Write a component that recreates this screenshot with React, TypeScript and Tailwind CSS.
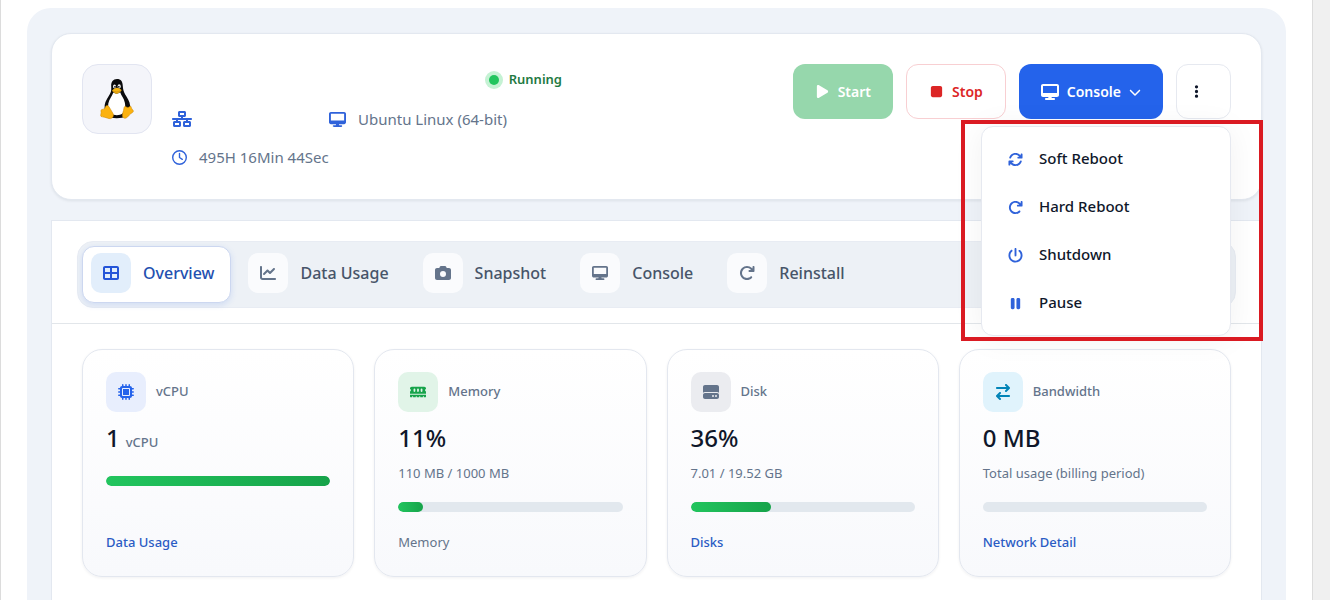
import { useState } from "react";
import type { IconType } from "react-icons";
import {
  FaArrowRightArrowLeft,
  FaArrowRotateRight,
  FaArrowsRotate,
  FaCamera,
  FaChartLine,
  FaChevronDown,
  FaDesktop,
  FaEllipsisVertical,
  FaHardDrive,
  FaMemory,
  FaMicrochip,
  FaNetworkWired,
  FaPause,
  FaPlay,
  FaPowerOff,
  FaRegClock,
  FaStop,
  FaTableCellsLarge,
} from "react-icons/fa6";

// Types
type Stat = {
  label: string;
  value: string;
  unit?: string;
  detail?: string;
  percent: number;
  footer: string;
  isLink: boolean;
  icon: IconType;
  tile: string;
};

const tabs: { name: string; icon: IconType }[] = [
  { name: "Overview", icon: FaTableCellsLarge },
  { name: "Data Usage", icon: FaChartLine },
  { name: "Snapshot", icon: FaCamera },
  { name: "Console", icon: FaDesktop },
  { name: "Reinstall", icon: FaArrowRotateRight },
];

const powerActions: { name: string; icon: IconType }[] = [
  { name: "Soft Reboot", icon: FaArrowsRotate },
  { name: "Hard Reboot", icon: FaArrowRotateRight },
  { name: "Shutdown", icon: FaPowerOff },
  { name: "Pause", icon: FaPause },
];

const stats: Stat[] = [
  {
    label: "vCPU",
    value: "1",
    unit: "vCPU",
    percent: 100,
    footer: "Data Usage",
    isLink: true,
    icon: FaMicrochip,
    tile: "bg-[#e8eefd] text-[#2563eb]",
  },
  {
    label: "Memory",
    value: "11%",
    detail: "110 MB / 1000 MB",
    percent: 11,
    footer: "Memory",
    isLink: false,
    icon: FaMemory,
    tile: "bg-[#e1f4e8] text-[#16a34a]",
  },
  {
    label: "Disk",
    value: "36%",
    detail: "7.01 / 19.52 GB",
    percent: 36,
    footer: "Disks",
    isLink: true,
    icon: FaHardDrive,
    tile: "bg-[#ebecf0] text-[#64748b]",
  },
  {
    label: "Bandwidth",
    value: "0 MB",
    detail: "Total usage (billing period)",
    percent: 0,
    footer: "Network Detail",
    isLink: true,
    icon: FaArrowRightArrowLeft,
    tile: "bg-[#e0f3fc] text-[#0284b7]",
  },
];

function Tux() {
  return (
    <svg viewBox="0 0 34 42" className="h-[42px] w-[34px]" role="img" aria-label="Linux">
      <path
        d="M17 1c-4 0-6 3-5.800 7 .1 3 .4 5-1.300 8-1.700 3-4.700 7-5.200 11-.5 4 .5 8 3 11 3 3 15 3 18 0 3-2 5-6 4.500-10-.4-5-3-8-5-11.500C23.500 13.500 23 11 22.800 8 22.600 3.500 21 1 17 1z"
        fill="#0b0b0d"
      />
      <path
        d="M13.300 14.500c-1 3-4.300 7-5 11-.6 4 .2 7 3 10 2.500 2.300 8.500 2.300 11.200 0 2.700-2.500 3.200-7 2.300-11-.8-4-3.600-7-4.600-10.200-2 1.600-4.700 1.900-6.900.2z"
        fill="#fff"
      />
      <ellipse cx="14.500" cy="8.400" rx="1.500" ry="2" fill="#f4f4f4" />
      <ellipse cx="19.200" cy="8.400" rx="1.600" ry="2.100" fill="#f4f4f4" />
      <circle cx="15" cy="8.800" r=".9" fill="#111" />
      <circle cx="18.800" cy="8.800" r=".9" fill="#111" />
      <path d="M12.300 12.200c1.500-1.600 3-2.500 4.500-2.500s3 .8 4.500 2.100c.5.900-.2 1.500-1 2-1.200.9-2.200 1.900-3.700 1.900s-3.200-1.600-4.100-2.400c-.4-.4-.4-.8-.2-1.100z" fill="#f5b514" />
      <path d="M12.600 12.900c2.800 1.700 5.300 1.500 8-.2" fill="none" stroke="#a86d05" strokeWidth=".5" />
      <path
        d="M6.400 27.700c1-.5 2 .1 2.800 1.300 1.300 2 2.500 4.300 3.700 6.300 1.200 2.200.2 4.800-2.300 5.300-2.200.3-4.200-1-6.300-1.400-1.700-.3-3.300-.3-3.600-1.300-.3-1.100.5-2.100.4-3.500-.1-1-.4-2 .3-2.700.8-.7 2.200-.2 3-1 .9-.9 1-2.500 2-3z"
        fill="#fbb20f"
        stroke="#c98405"
        strokeWidth=".5"
      />
      <path
        d="M23.900 30.200c.2-1.700 1-2 2-1.500 1.700 1.200 3.200 1 4.200-.7.800 0 1.100 1 1.400 2.100.4 1.300 1.800 2 1.900 3 .1 1.200-1.600 1.900-3 2.900-1.600 1.200-2.400 3.200-4.300 4-2 .8-3.700-.4-3.700-2.500 0-2.400 1.200-4.500 1.500-7.300z"
        fill="#fbb20f"
        stroke="#c98405"
        strokeWidth=".5"
      />
    </svg>
  );
}

function PowerMenu() {
  return (
    <div className="absolute top-full right-0 z-20 mt-[7px] w-[250px] rounded-xl border border-[#e6e9f0] bg-white py-2 shadow-[0_2px_32px_rgba(15,23,42,0.06)]">
      <ul>
        {powerActions.map(({ name, icon: Icon }) => (
          <li key={name}>
            <button type="button" className="flex h-12 w-full items-center gap-4 pl-[26px] text-left text-[15px] font-medium text-[#0f172a]">
              <Icon className="size-[15px] text-[#2f62da]" />
              {name}
            </button>
          </li>
        ))}
      </ul>
      {/* Highlight frame */}
      <div className="pointer-events-none absolute -top-[7px] -right-[33px] -bottom-1.5 -left-[21px] border-4 border-[#da1a22]" />
    </div>
  );
}

function ServerHeader() {
  const [menuOpen, setMenuOpen] = useState(true);

  return (
    <header className="flex items-start justify-between rounded-[20px] border border-[#e3e8f0] bg-white p-[30px] pb-[31px] shadow-[0_1px_3px_rgba(15,23,42,0.08)]">
      <div className="flex gap-5">
        <div className="flex size-[70px] items-center justify-center rounded-2xl border border-[#e2e5f1] bg-[#f4f5fa]">
          <Tux />
        </div>
        <div className="text-[15px] text-[#64748b]">
          <div className="flex h-8 min-w-[402px] items-center justify-end gap-2.5 pr-3 text-[13px] font-semibold text-[#1f7a43]">
            <span className="size-2.5 rounded-full bg-[#22c55e] ring-4 ring-[#c5f2d4]" />
            Running
          </div>
          <div className="mt-3 flex h-[22px] items-center">
            <FaNetworkWired className="mr-[137px] h-4 w-5 text-[#2f62da]" />
            <FaDesktop className="mr-3 size-[17px] text-[#2f62da]" />
            Ubuntu Linux (64-bit)
          </div>
          <div className="mt-4 flex h-[22px] items-center gap-3">
            <FaRegClock className="size-[15px] text-[#2f62da]" />
            495H 16Min 44Sec
          </div>
        </div>
      </div>

      {/* Actions */}
      <div className="flex h-[55px] gap-[13px] text-sm font-semibold">
        <button type="button" disabled className="flex items-center gap-2 rounded-xl bg-[#96d7ac] px-[22px] text-white">
          <FaPlay className="size-[15px]" />
          Start
        </button>
        <button type="button" className="flex items-center gap-2 rounded-xl border border-[#f8cfd2] bg-white px-[22px] text-[#dc2626]">
          <FaStop className="size-[15px]" />
          Stop
        </button>
        <button type="button" className="flex items-center gap-2 rounded-xl bg-[#2463eb] px-[22px] text-white">
          <FaDesktop className="size-[18px]" />
          Console
          <FaChevronDown className="size-3" />
        </button>
        <div className="relative">
          <button
            type="button"
            aria-label="More actions"
            aria-expanded={menuOpen}
            onClick={() => setMenuOpen(!menuOpen)}
            className="flex h-full w-[55px] items-center rounded-xl border border-[#e6e9f0] bg-white pl-3 text-[#0f172a]"
          >
            <FaEllipsisVertical className="size-[15px]" />
          </button>
          {menuOpen && <PowerMenu />}
        </div>
      </div>
    </header>
  );
}

function StatCard({ stat }: { stat: Stat }) {
  const Icon = stat.icon;

  return (
    <article className="flex min-h-[228px] flex-col rounded-[20px] border border-[#e3e7ef] bg-linear-to-b from-white to-[#f8f9fc] px-[23px] pt-[22px] pb-6 shadow-[0_1px_3px_rgba(15,23,42,0.06)]">
      <div className="flex items-center gap-2.5">
        <span className={`flex size-10 items-center justify-center rounded-[10px] ${stat.tile}`}>
          <Icon className="size-4" />
        </span>
        <h3 className="text-[13px] font-medium text-[#64748b]">{stat.label}</h3>
      </div>
      <p className="mt-2 flex h-9 items-baseline gap-1.5 text-2xl leading-9 font-medium text-[#0f172a]">
        {stat.value}
        {stat.unit && <span className="text-[13px] leading-5 text-[#64748b]">{stat.unit}</span>}
      </p>
      {stat.detail && <p className="mt-2 text-[13px] leading-[18px] text-[#64748b]">{stat.detail}</p>}
      <div className="mt-5 h-2.5 overflow-hidden rounded-full bg-[#e2e8ee]">
        <div
          className="h-full rounded-full bg-linear-to-r from-[#22c55e] to-[#16a34a]"
          style={{ width: `${stat.percent}%` }}
        />
      </div>
      <div className="mt-auto text-[13px] leading-5">
        {stat.isLink ? (
          <a href="#" className="font-medium text-[#2b5cc4]">{stat.footer}</a>
        ) : (
          <span className="text-[#64748b]">{stat.footer}</span>
        )}
      </div>
    </article>
  );
}

export default function App() {
  const [activeTab, setActiveTab] = useState("Overview");

  return (
    <div className="h-screen overflow-hidden bg-[#f0f0f0] pr-[17px] font-['Noto_Sans',sans-serif]">
      <div className="min-h-full border-x border-[#dcdcdc] bg-white px-[26px] pt-2">
        <main className="rounded-t-3xl bg-[#eff3f9] px-6 pt-[25px]">
          <ServerHeader />

          <section className="mt-5 border border-b-0 border-[#e3e8f0] bg-white pb-10">
            {/* Tabs */}
            <div className="border-b border-[#e2e6ea] px-[25px] pt-5 pb-[15px]">
              <nav className="flex gap-2 rounded-2xl border border-[#e8ecf3] bg-[#edf1f6] p-1">
                {tabs.map(({ name, icon: Icon }) => (
                  <button
                    key={name}
                    type="button"
                    onClick={() => setActiveTab(name)}
                    className={`flex h-[57px] items-center gap-3 rounded-xl border pr-4 pb-[3px] pl-2 font-medium ${activeTab === name
                      ? "border-[#ccd7f0] bg-white text-[#2450b0] shadow-[0_2px_6px_rgba(37,99,235,0.15)]"
                      : "border-transparent text-[#475569]"
                      }`}
                  >
                    <span
                      className={`flex size-10 items-center justify-center rounded-[10px] ${activeTab === name ? "bg-[#e2eefb] text-[#2555d8]" : "bg-[#fafbfd] text-[#64748b]"
                        }`}
                    >
                      <Icon className="size-4" />
                    </span>
                    {name}
                  </button>
                ))}
              </nav>
            </div>

            {/* Stats */}
            <div className="grid grid-cols-4 gap-5 px-[30px] pt-[25px]">
              {stats.map((stat) => (
                <StatCard key={stat.label} stat={stat} />
              ))}
            </div>
          </section>
        </main>
      </div>
    </div>
  );
}
